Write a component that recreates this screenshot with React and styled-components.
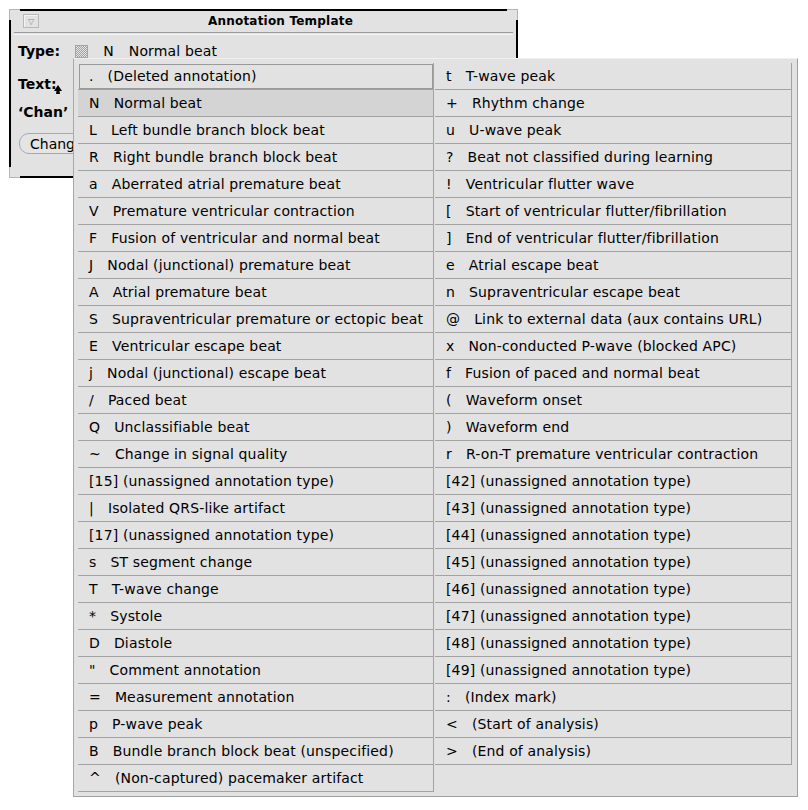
import React from "react";
import styled, { createGlobalStyle } from "styled-components";

const GlobalStyle = createGlobalStyle`
  html, body {
    margin: 0;
    padding: 0;
    background: #ffffff;
  }
  body {
    font-family: "DejaVu Sans", "Liberation Sans", sans-serif;
    color: #000;
  }
`;

const Desktop = styled.div`
  position: relative;
  width: 808px;
  height: 810px;
  overflow: hidden;
`;

const Window = styled.div`
  position: absolute;
  left: 9px;
  top: 9px;
  width: 505px;
  height: 165px;
  border: 2px solid #000;
  background: #e2e2e2;
  display: flex;
  flex-direction: column;
`;

const Corner = styled.div`
  position: absolute;
  width: 10px;
  height: 10px;
  background: #e2e2e2;
  ${(p) => (p.$v === "top" ? "top: -2px; border-top: 1px solid #b4b4b4;" : "bottom: -2px; border-bottom: 1px solid #b4b4b4;")}
  ${(p) => (p.$h === "left" ? "left: -2px; border-left: 1px solid #b4b4b4;" : "right: -2px; border-right: 1px solid #b4b4b4;")}
`;

const TitleBar = styled.div`
  height: 20px;
  display: flex;
  align-items: center;
  padding-left: 12px;
`;

const MenuButton = styled.div`
  width: 14px;
  height: 12px;
  border: 1px solid #b8b8b8;
  box-shadow: inset 1px 1px 0 #f4f4f4;
  display: flex;
  align-items: center;
  justify-content: center;
  font-size: 8px;
  color: #909090;
`;

const Title = styled.div`
  flex: 1;
  text-align: center;
  font-weight: bold;
  font-size: 12px;
  letter-spacing: 0.2px;
  padding-left: 6px;
`;

const TitleRule = styled.div`
  margin: 1px 3px 0;
  height: 1px;
  border-top: 1px solid #9c9c9c;
  border-bottom: 1px solid #f6f6f6;
`;

const Body = styled.div`
  display: flex;
  flex-direction: column;
  padding-left: 7px;
`;

const FieldRow = styled.div`
  height: 26px;
  margin-top: ${(p) => p.$top}px;
  display: flex;
  align-items: center;
  font-size: 14px;
  white-space: nowrap;
`;

const Label = styled.span`
  font-weight: bold;
`;

const Stipple = styled.span`
  position: relative;
  width: 13px;
  height: 13px;
  margin: 0 15px 0 15px;
  border: 1px solid #a4a4a4;
  box-sizing: border-box;
  background-color: #e2e2e2;
  background-image: repeating-conic-gradient(#a0a0a0 0 25%, #e6e6e6 0 50%);
  background-size: 2px 2px;
`;

const Value = styled.span`
  font-size: 14px;
  letter-spacing: 0.15px;
  margin-right: ${(p) => p.$gap || 0}px;
`;

const PillButton = styled.div`
  margin-top: 8px;
  margin-left: 1px;
  height: 19px;
  width: 130px;
  border: 1px solid #a8a8a8;
  border-radius: 10px;
  display: flex;
  align-items: center;
  padding-left: 10px;
  font-size: 14px;
  background: #e4e4e4;
`;

const Popup = styled.div`
  position: absolute;
  left: 73px;
  top: 58px;
  width: 725px;
  height: 739px;
  background: #e2e2e2;
  border-top: 1px solid #f0f0f0;
  border-left: 1px solid #a8a8a8;
  border-right: 1px solid #a0a0a0;
  border-bottom: 1px solid #a0a0a0;
  padding: 4px 7px 7px 4px;
  box-sizing: border-box;
  display: grid;
  grid-template-columns: 356px 357px;
  column-gap: 1px;
  align-items: start;
`;

const Column = styled.div`
  display: flex;
  flex-direction: column;
`;

const Item = styled.div`
  height: 26px;
  border-bottom: 1px solid #a2a2a2;
  border-right: 1px solid #a2a2a2;
  padding-left: 11px;
  display: flex;
  align-items: center;
  font-size: 14px;
  letter-spacing: 0.15px;
  white-space: pre;
  overflow: hidden;
  background: ${(p) => (p.$active ? "#d4d4d4" : "transparent")};
  ${(p) => p.$framed && "outline: 1px solid #9a9a9a; outline-offset: -2px;"}
`;

const Key = styled.span`
  margin-right: 14px;
`;

const Cursor = styled.svg`
  position: absolute;
  left: 54px;
  top: 85px;
`;

const leftItems = [
  [".", "(Deleted annotation)"],
  ["N", "Normal beat"],
  ["L", "Left bundle branch block beat"],
  ["R", "Right bundle branch block beat"],
  ["a", "Aberrated atrial premature beat"],
  ["V", "Premature ventricular contraction"],
  ["F", "Fusion of ventricular and normal beat"],
  ["J", "Nodal (junctional) premature beat"],
  ["A", "Atrial premature beat"],
  ["S", "Supraventricular premature or ectopic beat"],
  ["E", "Ventricular escape beat"],
  ["j", "Nodal (junctional) escape beat"],
  ["/", "Paced beat"],
  ["Q", "Unclassifiable beat"],
  ["~", "Change in signal quality"],
  [null, "[15] (unassigned annotation type)"],
  ["|", "Isolated QRS-like artifact"],
  [null, "[17] (unassigned annotation type)"],
  ["s", "ST segment change"],
  ["T", "T-wave change"],
  ["*", "Systole"],
  ["D", "Diastole"],
  ['"', "Comment annotation"],
  ["=", "Measurement annotation"],
  ["p", "P-wave peak"],
  ["B", "Bundle branch block beat (unspecified)"],
  ["^", "(Non-captured) pacemaker artifact"],
];

const rightItems = [
  ["t", "T-wave peak"],
  ["+", "Rhythm change"],
  ["u", "U-wave peak"],
  ["?", "Beat not classified during learning"],
  ["!", "Ventricular flutter wave"],
  ["[", "Start of ventricular flutter/fibrillation"],
  ["]", "End of ventricular flutter/fibrillation"],
  ["e", "Atrial escape beat"],
  ["n", "Supraventricular escape beat"],
  ["@", "Link to external data (aux contains URL)"],
  ["x", "Non-conducted P-wave (blocked APC)"],
  ["f", "Fusion of paced and normal beat"],
  ["(", "Waveform onset"],
  [")", "Waveform end"],
  ["r", "R-on-T premature ventricular contraction"],
  [null, "[42] (unassigned annotation type)"],
  [null, "[43] (unassigned annotation type)"],
  [null, "[44] (unassigned annotation type)"],
  [null, "[45] (unassigned annotation type)"],
  [null, "[46] (unassigned annotation type)"],
  [null, "[47] (unassigned annotation type)"],
  [null, "[48] (unassigned annotation type)"],
  [null, "[49] (unassigned annotation type)"],
  [":", "(Index mark)"],
  ["<", "(Start of analysis)"],
  [">", "(End of analysis)"],
];

const MenuColumn = ({ items, active, framed }) => (
  <Column>
    {items.map(([key, text], i) => (
      <Item key={i} $active={i === active} $framed={i === framed}>
        {key && <Key>{key}</Key>}
        <span>{text}</span>
      </Item>
    ))}
  </Column>
);

const App = () => {
  return (
    <Desktop>
      <GlobalStyle />
      <Window>
        <Corner $v="top" $h="left" />
        <Corner $v="top" $h="right" />
        <Corner $v="bottom" $h="left" />
        <Corner $v="bottom" $h="right" />
        <TitleBar>
          <MenuButton>▽</MenuButton>
          <Title>Annotation Template</Title>
        </TitleBar>
        <TitleRule />
        <Body>
          <FieldRow $top={3}>
            <Label>Type:</Label>
            <Stipple />
            <Value $gap={15}>N</Value>
            <Value>Normal beat</Value>
          </FieldRow>
          <FieldRow $top={7}>
            <Label>Text:</Label>
          </FieldRow>
          <FieldRow $top={2}>
            <Label>‘Chan’ f</Label>
          </FieldRow>
          <PillButton>Chang</PillButton>
        </Body>
      </Window>

      <Cursor width="8" height="9" viewBox="0 0 8 9">
        <path d="M4 0 L8 6 L5.5 6 L6 9 L2 9 L2.5 6 L0 6 Z" fill="#000" />
      </Cursor>

      <Popup>
        <MenuColumn items={leftItems} active={1} framed={0} />
        <MenuColumn items={rightItems} />
      </Popup>
    </Desktop>
  );
};

export default App;
